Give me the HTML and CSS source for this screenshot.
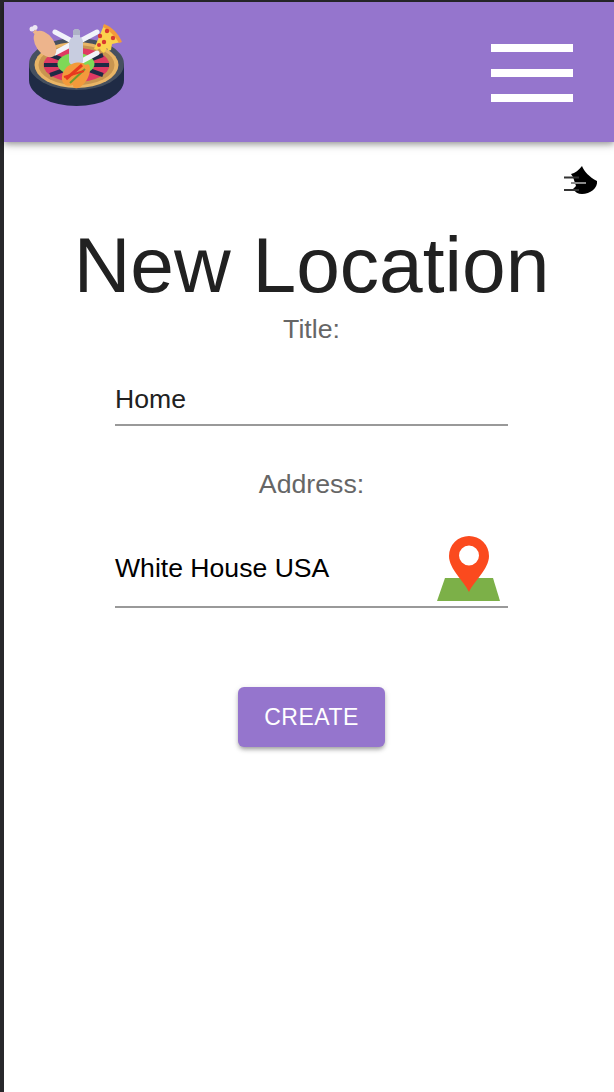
FILE: index.html
```html
<!DOCTYPE html>
<html lang="en">
<head>
<meta charset="utf-8">
<title>New Location</title>
<link rel="stylesheet" href="styles.css">
</head>
<body>
<div class="frame">
  <header class="appbar">
    <svg class="logo" width="100" height="84" viewBox="0 0 100 84" aria-label="Logo">
      <ellipse cx="48.500" cy="57" rx="47.500" ry="26" fill="#1f2b45"/>
      <rect x="1" y="41" width="95" height="16" fill="#1f2b45"/>
      <ellipse cx="48.500" cy="41" rx="47.500" ry="26" fill="#46505f"/>
      <ellipse cx="48.500" cy="42" rx="42" ry="23" fill="#e9b566"/>
      <ellipse cx="48.500" cy="42" rx="38" ry="20" fill="#c89550"/>
      <ellipse cx="48.500" cy="42" rx="33" ry="17" fill="#df3a63"/>
      <path d="M16 42h18M63 42h18M22 32l14 5M75 32l-14 5M22 52l14-5M75 52l-14-5M48.500 27v8" stroke="#1f2b45" stroke-width="4"/>
      <ellipse cx="48" cy="41" rx="18.500" ry="11" fill="#7ed957"/>
      <path d="M27 9l15 8M69 9l-15 8M27 30l15-8M69 30l-15 8" stroke="#f1f3fa" stroke-width="5" stroke-linecap="round"/>
      <path d="M41 38V20c0-3 2-5 4-6V9c0-4 7-4 7 0v5c2 1 3 3 3 6v18c0 6-14 6-14 0z" fill="#c8cde0"/>
      <path d="M45 9c0-4 7-4 7 0v3h-7z" fill="#aeb3c6"/>
      <ellipse cx="17" cy="21" rx="15" ry="9" transform="rotate(55 17 21)" fill="#edb48c"/>
      <path d="M11 12L6 8" stroke="#edb48c" stroke-width="4"/>
      <circle cx="4" cy="6" r="2.500" fill="#ece6f4"/><circle cx="7" cy="4.500" r="2.500" fill="#ece6f4"/>
      <path d="M76 2l17 17-9 2-1 6-3 1-1-3-3 5-3-2-1-3-3 2-3-1z" fill="#fbd24e"/>
      <path d="M76 1c8 3 14 9 18 18l-3 1C87 13 82 8 75 4z" fill="#f39a3b"/>
      <circle cx="79" cy="8" r="2.200" fill="#d9392f"/><circle cx="72" cy="13" r="2.200" fill="#d9392f"/><circle cx="85" cy="15" r="2.200" fill="#d9392f"/><circle cx="76" cy="19" r="2.200" fill="#d9392f"/><circle cx="71" cy="22" r="2" fill="#d9392f"/>
      <path d="M44 41c5-2 11-2 13 1 4-2 5 0 5 4 0 8-6 17-12 19-4 1-5-1-5-3-5 2-10 0-11-5-1-7 4-14 10-16z" fill="#f39a3b"/>
      <path d="M38 56l16-14" stroke="#e8391f" stroke-width="3"/>
      <path d="M42 60l15-14" stroke="#6c9c2c" stroke-width="2"/>
      <path d="M36 54l20-6" stroke="#e8391f" stroke-width="2"/>
    </svg>
    <svg class="menu" width="82" height="58" viewBox="0 0 82 58" aria-label="Menu">
      <path d="M0 0h82v8H0zM0 25h82v8H0zM0 50h82v8H0z" fill="#fff"/>
    </svg>
  </header>
  <div class="status">
    <svg width="34" height="30" viewBox="0 0 34 30" aria-hidden="true">
      <path d="M7 9c4-1 8-4 11-8 2 5 7 11 15 15 1 7-7 13-15 13-4 0-7-2-9-5l3-3-3-9z" fill="#000"/>
      <path d="M0 12.500h15M0 25h15" stroke="#333" stroke-width="2"/>
      <path d="M7 18h15" stroke="#8a8a8a" stroke-width="2"/>
    </svg>
  </div>
  <main class="form">
    <h1 class="title">New Location</h1>
    <label class="label label-title">Title:</label>
    <div class="field field-title"><span>Home</span></div>
    <label class="label label-address">Address:</label>
    <div class="field field-address">
      <span>White House USA</span>
      <svg class="pin" width="63" height="65" viewBox="0 0 63 65" aria-label="Map pin">
        <path d="M8 42h48l7 23H0z" fill="#7cb048"/>
        <path fill-rule="evenodd" d="M32 56C27 45 12 33 12 20a20 20 0 0 1 40 0c0 13-15 25-20 36zM32 9.500a10 10 0 1 0 0 20 10 10 0 0 0 0-20z" fill="#fb4a1e"/>
      </svg>
    </div>
    <button class="create" type="button">CREATE</button>
  </main>
</div>
</body>
</html>
```
FILE: styles.css
```css
* { box-sizing: border-box; }
html, body { margin: 0; height: 100%; }
body {
  background: #28282b;
  padding: 2px 0 0 4px;
  font-family: "Liberation Sans", Arial, sans-serif;
  overflow: hidden;
}
.frame { background: #fff; height: 1090px; }
.appbar {
  height: 140px;
  background: #9575cd;
  box-shadow: 0 2px 6px rgba(0,0,0,.35), 0 4px 10px rgba(0,0,0,.1);
  display: flex;
  justify-content: space-between;
  align-items: flex-start;
  padding: 21px 41px 0 24px;
  position: relative;
}
.menu { margin-top: 21px; }
.status { display: flex; justify-content: flex-end; padding: 23px 16px 0 0; height: 81px; }
.form { display: flex; flex-direction: column; align-items: center; padding-left: 5px; }
.title {
  margin: 0;
  font-size: 78.500px;
  font-weight: 400;
  line-height: 84px;
  color: #212121;
}
.label { font-size: 26.700px; line-height: 30px; color: #666; }
.label-title { margin-top: 7px; }
.label-address { margin-top: 43px; }
.field {
  width: 393px;
  border-bottom: 2px solid #999;
  font-size: 26.600px;
  color: #000;
  display: flex;
  justify-content: space-between;
  align-items: flex-end;
}
.field-title { height: 82px; padding-bottom: 9px; color: #212121; }
.field-address { height: 94px; margin-top: 15px; }
.field-address span { margin-bottom: 22px; }
.pin { margin-right: 8px; margin-bottom: 5px; }
.create {
  margin-top: 79px;
  width: 147px;
  height: 60px;
  border: 0;
  border-radius: 6px;
  background: #9575cd;
  color: #fff;
  font: 400 23px "Liberation Sans", Arial, sans-serif;
  letter-spacing: .5px;
  box-shadow: 0 3px 4px -1px rgba(0,0,0,.3), 0 2px 6px rgba(0,0,0,.15);
}
```
